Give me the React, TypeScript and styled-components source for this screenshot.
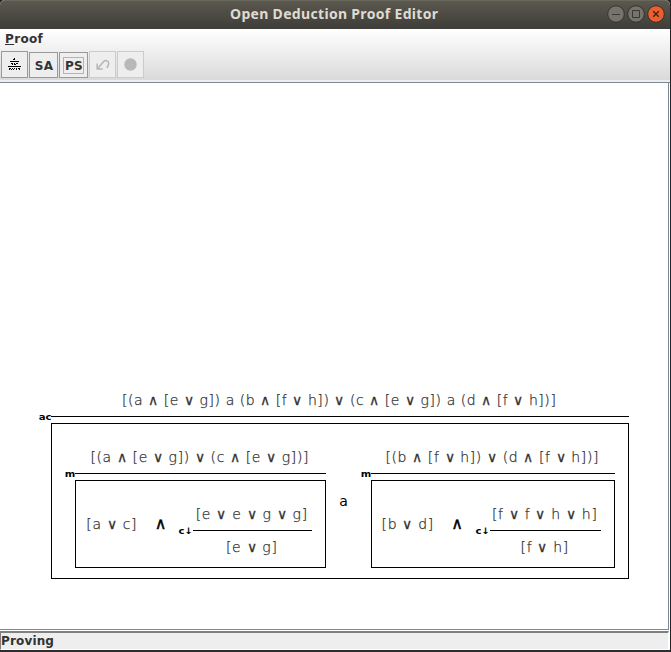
import React from "react";
import styled, { createGlobalStyle } from "styled-components";

const GlobalStyle = createGlobalStyle`
  * { box-sizing: border-box; }
  body { margin: 0; background: #2b2b2b; font-family: "DejaVu Sans", sans-serif; overflow: hidden; }
`;

const Window = styled.div`
  width: 671px;
  height: 652px;
  display: flex;
  flex-direction: column;
  background: #ffffff;
  border-right: 1px solid #232425;
  border-bottom: 2px solid #2c2b2e;
`;

const TitleBar = styled.header`
  height: 29px;
  flex: none;
  display: flex;
  align-items: flex-start;
  padding: 0 5px 0 230px;
  border-radius: 5px 5px 0 0;
  border-top: 1px solid #6a675d;
  background: linear-gradient(#5b584f, #3e3d38);
  box-shadow: 0 -5px 0 5px #232425;
  clip-path: inset(0);
`;

const Title = styled.h1`
  margin: 0;
  flex: 1;
  font: 700 14px/26px "Noto Sans", sans-serif;
  letter-spacing: 0.32px;
  color: #dfdbd2;
  white-space: nowrap;
`;

const WindowButtons = styled.div`
  display: flex;
  gap: 2px;
  padding-top: 4px;
`;

const Header = styled.div`
  height: 54px;
  flex: none;
  background: linear-gradient(#ffffff, #dadada 51px, #eeeeee 51px);
  border-bottom: 1px solid #7a8a99;
`;

const MenuBar = styled.nav`
  height: 22px;
  padding-left: 5px;
  font-size: 12px;
  line-height: 20px;
  letter-spacing: 0.35px;
  font-weight: bold;
  color: #333333;
`;

const Mnemonic = styled.span`
  text-decoration: underline;
  text-underline-offset: 1px;
  text-decoration-thickness: 1px;
`;

const ToolBar = styled.div`
  display: flex;
  align-items: flex-end;
  height: 27px;
  padding-left: 1px;
  gap: 1px;
`;

const ToolButton = styled.button<{ $width: number; $height?: number }>`
  width: ${(p) => p.$width}px;
  height: ${(p) => p.$height ?? 27}px;
  display: flex;
  align-items: center;
  justify-content: center;
  padding: 0;
  border: 1px solid #999999;
  background: #eeeeee;
  font: bold 12px/14px "DejaVu Sans", sans-serif;
  letter-spacing: 0.2px;
  color: #333333;
  &:disabled { border-color: #cccccc; }
`;

const ButtonLabel = styled.span<{ $focused?: boolean }>`
  height: 17px;
  padding: 1px 0 0 1px;
  border: 1px solid ${(p) => (p.$focused ? "#a3b8cc" : "transparent")};
`;

const Canvas = styled.main`
  flex: 1;
  min-height: 0;
  background: #ffffff;
  border-right: 1px solid #7a8a99;
  border-bottom: 1px solid #7a8a99;
  margin: 0 1px 1px 0;
  padding: 303px 0 0 51px;
`;

const Status = styled.footer`
  height: 19px;
  flex: none;
  margin: 0 1px 0 0;
  border-top: 2px solid #808080;
  border-left: 1px solid #808080;
  border-right: 1px solid #ffffff;
  border-bottom: 1px solid #ffffff;
  background: #eeeeee;
  font: bold 12px/16px "DejaVu Sans", sans-serif;
  letter-spacing: 0.15px;
  color: #333333;
`;

const Derivation = styled.section<{ $width: number }>`
  width: ${(p) => p.$width}px;
  flex: none;
`;

const Formula = styled.div<{ $height: number; $spacing?: number; $line?: number }>`
  height: ${(p) => p.$height}px;
  display: flex;
  justify-content: center;
  padding-right: 1.5px;
  font-size: 14px;
  font-weight: 200;
  line-height: ${(p) => p.$line ?? 28}px;
  letter-spacing: ${(p) => p.$spacing ?? 0.7}px;
  white-space: pre;
  color: #333333;
  -webkit-text-stroke: 0.25px #333333;
`;

const Inference = styled.div`
  position: relative;
  height: 1px;
  background: #000000;
`;

const RuleName = styled.span`
  position: absolute;
  right: 100%;
  top: -5px;
  font-size: 9px;
  line-height: 12px;
  font-weight: bold;
  color: #000000;
  transform: scaleX(1.12);
  transform-origin: right;
`;

const Box = styled.div<{ $height: number; $pad: string }>`
  height: ${(p) => p.$height}px;
  margin-top: 6px;
  padding: ${(p) => p.$pad};
  display: flex;
  border: 1px solid #000000;
`;

const Connective = styled.div<{ $width: number; $top: number; $symbol?: boolean }>`
  width: ${(p) => p.$width}px;
  padding: ${(p) => p.$top}px 10px 0 0;
  flex: none;
  text-align: center;
  font-size: ${(p) => (p.$symbol ? 16 : 14)}px;
  line-height: 28px;
  color: #000000;
  -webkit-text-stroke: ${(p) => (p.$symbol ? 0.4 : 0)}px #000000;
`;

const Operand = styled.div`
  padding-top: 10px;
  width: 51px;
  flex: none;
`;

function Rule({ name }: { name: string }) {
  return <Inference><RuleName>{name}</RuleName></Inference>;
}

interface MedialProps {
  width: number;
  premise: string;
  operand: string;
  gap: number;
  contractionWidth: number;
  from: string;
  to: string;
}

function Medial({ width, premise, operand, gap, contractionWidth, from, to }: MedialProps) {
  return (
    <Derivation $width={width}>
      <Formula $height={30} $spacing={0.62}>{premise}</Formula>
      <Rule name="m" />
      <Box $height={88} $pad="19px 0 0 11px">
        <Operand><Formula $height={28}>{operand}</Formula></Operand>
        <Connective $width={gap} $top={10} $symbol>∧</Connective>
        <Derivation $width={contractionWidth}>
          <Formula $height={30}>{from}</Formula>
          <Rule name="c↓" />
          <Formula $height={32} $line={32}>{to}</Formula>
        </Derivation>
      </Box>
    </Derivation>
  );
}

function WindowButton({ kind }: { kind: "min" | "max" | "close" }) {
  const close = kind === "close";
  return (
    <svg width="18" height="18" viewBox="0 0 18 18">
      <circle cx="9" cy="9" r="8.3" fill={close ? "#ec5e2d" : "#75736b"} stroke="#35342f" />
      {kind === "min" && <path d="M5 9.5h8" stroke="#393833" />}
      {kind === "max" && <path d="M5.5 5.5h7v7h-7z" fill="none" stroke="#393833" />}
      {close && <path d="M6.2 6.2l5.6 5.6M11.8 6.2l-5.6 5.6" stroke="#40271d" strokeWidth="1.5" />}
    </svg>
  );
}

function ProofTreeIcon() {
  return (
    <svg width="13" height="13" viewBox="0 0 13 13" shapeRendering="crispEdges" fill="#000">
      <path d="M6 0h1v1H6zM5 1h2v1H5zM2 3h9v1H2zM3 5h2v1H3zM6 5h1v1H6zM8 5h2v1H8zM4 6h1v1H4zM6 6h2v1H6zM0 8h13v1H0zM1 10h2v1H1zM4 10h1v1H4zM6 10h1v1H6zM8 10h1v1H8zM10 10h2v1h-2zM1 11h1v1H1zM3 11h1v1H3zM5 11h1v1H5zM8 11h1v1H8zM11 11h1v1h-1z" />
    </svg>
  );
}

export default function App() {
  return (
    <>
      <GlobalStyle />
      <Window>
        <TitleBar>
          <Title>Open Deduction Proof Editor</Title>
          <WindowButtons>
            <WindowButton kind="min" />
            <WindowButton kind="max" />
            <WindowButton kind="close" />
          </WindowButtons>
        </TitleBar>
        <Header>
          <MenuBar><Mnemonic>P</Mnemonic>roof</MenuBar>
          <ToolBar>
            <ToolButton $width={27}><ProofTreeIcon /></ToolButton>
            <ToolButton $width={29} $height={26}><ButtonLabel>SA</ButtonLabel></ToolButton>
            <ToolButton $width={29} $height={26}><ButtonLabel $focused>PS</ButtonLabel></ToolButton>
            <ToolButton $width={27} disabled>
              <svg width="14" height="12" viewBox="0 0 14 12" fill="none" stroke="#b5b5b5" strokeWidth="1.5">
                <path d="M1.2 4.5v5.500h5.500M1.5 9.700l6-7c1.500-1.700 5-1.500 5.200 1.200.1 2-.8 3.800-2 5" />
              </svg>
            </ToolButton>
            <ToolButton $width={27} disabled>
              <svg width="13" height="13" viewBox="0 0 13 13"><circle cx="6.5" cy="6.5" r="6.2" fill="#b8b8b8" /></svg>
            </ToolButton>
          </ToolBar>
        </Header>
        <Canvas>
          <Derivation $width={578}>
            <Formula $height={30} $spacing={0.56}>[(a ∧ [e ∨ g]) a (b ∧ [f ∨ h]) ∨ (c ∧ [e ∨ g]) a (d ∧ [f ∨ h])]</Formula>
            <Rule name="ac" />
            <Box $height={156} $pad="19px 0 0 23px">
              <Medial
                width={251}
                premise="[(a ∧ [e ∨ g]) ∨ (c ∧ [e ∨ g])]"
                operand="[a ∨ c]"
                gap={55}
                contractionWidth={119}
                from="[e ∨ e ∨ g ∨ g]"
                to="[e ∨ g]"
              />
              <Connective $width={45} $top={44}>a</Connective>
              <Medial
                width={244}
                premise="[(b ∧ [f ∨ h]) ∨ (d ∧ [f ∨ h])]"
                operand="[b ∨ d]"
                gap={56}
                contractionWidth={111}
                from="[f ∨ f ∨ h ∨ h]"
                to="[f ∨ h]"
              />
            </Box>
          </Derivation>
        </Canvas>
        <Status>Proving</Status>
      </Window>
    </>
  );
}
